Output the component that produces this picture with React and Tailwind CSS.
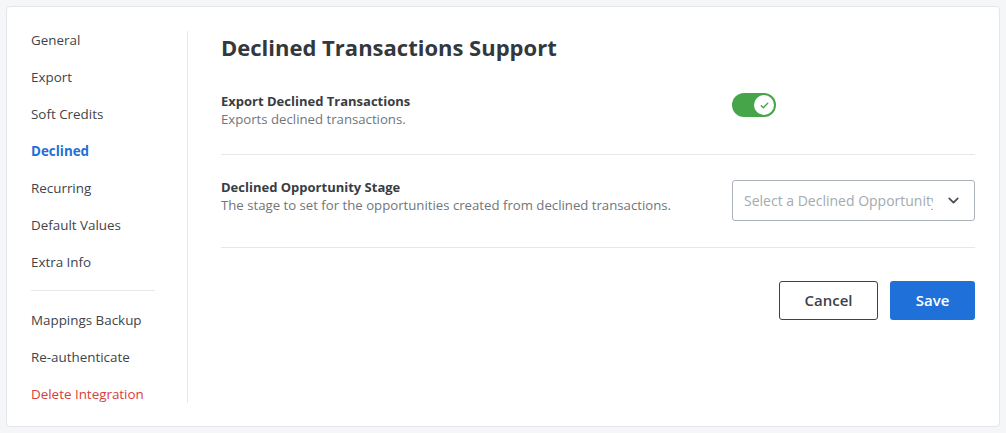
import { ChevronDown } from "lucide-react"

const navItems = [
  { label: "General" },
  { label: "Export" },
  { label: "Soft Credits" },
  { label: "Declined", active: true },
  { label: "Recurring" },
  { label: "Default Values" },
  { label: "Extra Info" },
]

const extraItems = [
  { label: "Mappings Backup" },
  { label: "Re-authenticate" },
  { label: "Delete Integration", danger: true },
]

function NavLink({ item }) {
  let color = "text-[#3f4449]"
  if (item.active) color = "text-[#1f6fd6] font-bold"
  if (item.danger) color = "text-[#d7403a]"
  return (
    <a href="#" className={`block text-[13.4px] leading-[18px] ${color}`}>
      {item.label}
    </a>
  )
}

function Toggle() {
  return (
    <button className="relative flex h-6 w-11 items-center rounded-full bg-[#46a548] px-[2px]">
      <span className="ml-auto flex h-5 w-5 items-center justify-center rounded-full bg-white">
        <svg viewBox="0 0 12 12" className="h-[11px] w-[11px]" fill="none">
          <path
            d="M2.5 6.3l2.2 2.2 4.8-5"
            stroke="#46a548"
            strokeWidth="1.5"
            strokeLinecap="round"
            strokeLinejoin="round"
          />
        </svg>
      </span>
    </button>
  )
}

export default function App() {
  return (
    <div
      className="min-h-[433px] bg-[#f5f6f8] px-[6px] pt-[6px]"
      style={{ fontFamily: "'Open Sans', 'Liberation Sans', sans-serif" }}
    >
      <div className="flex rounded-[4px] border border-[#e4e6e9] bg-white pt-6 pb-[23px] pl-6 pr-6">
        {/* sidebar */}
        <div className="w-[157px] shrink-0 border-r border-[#e6e8eb] pr-[32px]">
          <div className="flex flex-col gap-[19px]">
            {navItems.map((item) => (
              <NavLink key={item.label} item={item} />
            ))}
          </div>
          <div className="mt-[19px] mb-[20px] border-t border-[#e6e8eb]" />
          <div className="flex flex-col gap-[19px]">
            {extraItems.map((item) => (
              <NavLink key={item.label} item={item} />
            ))}
          </div>
        </div>

        {/* main */}
        <div className="flex-1 pl-[33px]">
          <h1 className="text-[22px] font-bold leading-8 text-[#33383d]">
            Declined Transactions Support
          </h1>

          <div className="mt-[29px] flex items-start justify-between border-b border-[#e6e8eb] pb-[26px]">
            <div>
              <div className="text-[13px] font-bold leading-[18px] text-[#383d42]">
                Export Declined Transactions
              </div>
              <div className="text-[13.2px] leading-[18px] text-[#6f767d]">
                Exports declined transactions.
              </div>
            </div>
            <div className="mt-[1px] w-[243px]">
              <Toggle />
            </div>
          </div>

          <div className="flex items-start justify-between border-b border-[#e6e8eb] pt-[23px] pb-[26px]">
            <div>
              <div className="text-[13px] font-bold leading-[18px] text-[#383d42]">
                Declined Opportunity Stage
              </div>
              <div className="text-[13.2px] leading-[19px] text-[#6f767d]">
                The stage to set for the opportunities created from declined transactions.
              </div>
            </div>
            <div className="mt-[2px] flex h-[41px] w-[243px] items-center rounded-[3px] border border-[#aab1b8] pl-[11px] pr-[12px]">
              <span className="flex-1 overflow-hidden whitespace-nowrap text-[14px] text-[#a3aab1]">
                Select a Declined Opportunity Stage
              </span>
              <ChevronDown className="ml-3 h-[17px] w-[17px] shrink-0 text-[#4a5056]" strokeWidth={2.5} />
            </div>
          </div>

          <div className="mt-[33px] flex justify-end gap-3">
            <button className="h-[39px] w-[99px] rounded-[3px] border border-[#3d4247] text-[15px] font-semibold text-[#3d4247]">
              Cancel
            </button>
            <button className="h-[39px] w-[85px] rounded-[3px] bg-[#1f70d9] text-[15px] font-semibold text-white">
              Save
            </button>
          </div>
        </div>
      </div>
    </div>
  )
}
